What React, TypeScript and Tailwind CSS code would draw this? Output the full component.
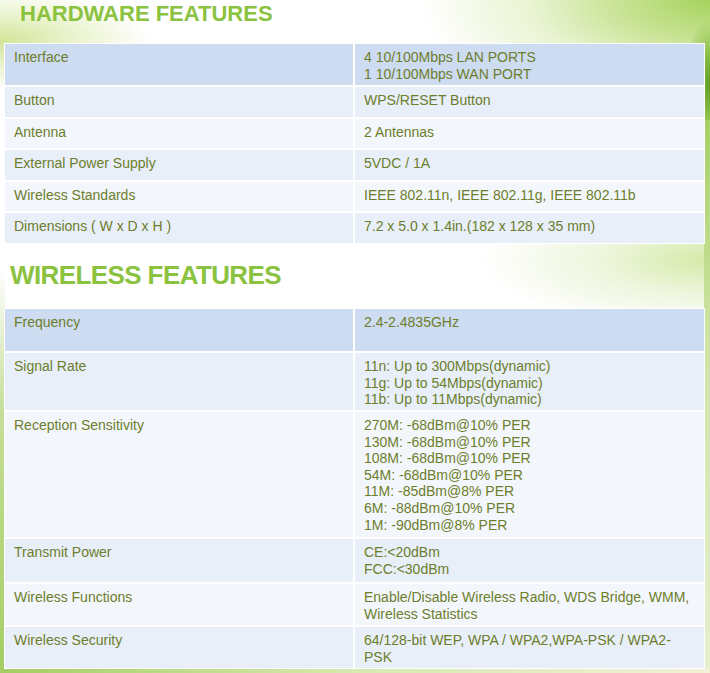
const HARDWARE = [
  { label: 'Interface', value: ['4 10/100Mbps LAN PORTS', '1 10/100Mbps WAN PORT'], h: 'h-[41px]' },
  { label: 'Button', value: ['WPS/RESET Button'], h: 'h-[29.5px]' },
  { label: 'Antenna', value: ['2 Antennas'], h: 'h-[29.5px]' },
  { label: 'External Power Supply', value: ['5VDC / 1A'], h: 'h-[29.5px]' },
  { label: 'Wireless Standards', value: ['IEEE 802.11n, IEEE 802.11g, IEEE 802.11b'], h: 'h-[29.5px]' },
  { label: 'Dimensions ( W x D x H )', value: ['7.2 x 5.0 x 1.4in.(182 x 128 x 35 mm)'], h: 'h-[29.5px]' },
]

const WIRELESS = [
  { label: 'Frequency', value: ['2.4-2.4835GHz'], h: 'h-[42px]' },
  {
    label: 'Signal Rate',
    value: ['11n: Up to 300Mbps(dynamic)', '11g: Up to 54Mbps(dynamic)', '11b: Up to 11Mbps(dynamic)'],
    h: 'h-[57px]',
  },
  {
    label: 'Reception Sensitivity',
    value: [
      '270M: -68dBm@10% PER',
      '130M: -68dBm@10% PER',
      '108M: -68dBm@10% PER',
      '54M: -68dBm@10% PER',
      '11M: -85dBm@8% PER',
      '6M: -88dBm@10% PER',
      '1M: -90dBm@8% PER',
    ],
    h: 'h-[125px]',
  },
  { label: 'Transmit Power', value: ['CE:<20dBm', 'FCC:<30dBm'], h: 'h-[43px]' },
  {
    label: 'Wireless Functions',
    value: ['Enable/Disable Wireless Radio, WDS Bridge, WMM,', 'Wireless Statistics'],
    h: 'h-[41px]',
  },
  {
    label: 'Wireless Security',
    value: ['64/128-bit WEP, WPA / WPA2,WPA-PSK / WPA2-', 'PSK'],
    h: 'h-[41px]',
  },
]

type Row = { label: string; value: string[]; h: string }

function SpecTable({ rows }: { rows: Row[] }) {
  return (
    <div className="ml-[4px] w-[701px] bg-white p-px flex flex-col gap-[2px]">
      {rows.map((row, i) => {
        const bg = i === 0 ? 'bg-[#cddcf1]' : i % 2 === 1 ? 'bg-[#e8eff9]' : 'bg-[#f3f7fc]'
        return (
          <div key={row.label} className={`flex gap-[2px] ${row.h}`}>
            <div className={`w-[348px] pl-[9px] pt-[5px] ${bg}`}>{row.label}</div>
            <div className={`flex-1 pl-[9px] pt-[5px] ${bg}`}>
              {row.value.map((line) => (
                <div key={line}>{line}</div>
              ))}
            </div>
          </div>
        )
      })}
    </div>
  )
}

export default function App() {
  return (
    <div className="relative w-[710px] h-[673px] overflow-hidden bg-white font-['Liberation_Sans',Arial,sans-serif] text-[14px] leading-[16.6px] text-[#6d7d2c]">
      {/* background glows */}
      <div className="absolute left-0 top-0 w-[220px] h-[90px] bg-[radial-gradient(150px_50px_at_0%_45%,#d3e59a_0%,#e8f2c8_45%,transparent_100%)]" />
      <div className="absolute right-0 top-0 w-[400px] h-[200px] bg-[radial-gradient(290px_125px_at_100%_0%,#a6d35e_0%,#c6e291_30%,#e9f4d2_62%,transparent_100%)]" />
      <div className="absolute right-0 top-[10px] w-[50px] h-[150px] bg-[radial-gradient(28px_65px_at_100%_50%,#5f9d25_0%,#8cc148_50%,transparent_100%)]" />
      <div className="absolute right-0 top-[170px] w-[320px] h-[180px] bg-[radial-gradient(230px_70px_at_100%_50%,#d6eaa8_0%,#eef6de_50%,transparent_100%)]" />
      <div className="absolute right-0 top-[120px] bottom-0 w-[6px] bg-[linear-gradient(to_bottom,#a6cf64,#cfe4a6_40%,#e6f0cf)]" />
      <div className="absolute left-0 top-[270px] bottom-0 w-[5px] bg-[linear-gradient(to_bottom,transparent,#c4df98_35%,#a5cd62)]" />
      <div className="absolute left-0 right-0 bottom-0 h-[5px] bg-[linear-gradient(to_right,#a5cd62,#d6e9b0_50%,#f3f0d8)]" />

      <div className="relative flex flex-col">
        <div className="h-[43px] pl-[20px] pt-[3px]">
          <h2 className="text-[22px] leading-none font-bold text-[#8bc23f]">HARDWARE FEATURES</h2>
        </div>
        <SpecTable rows={HARDWARE} />
        <div className="h-[64.5px] pl-[10px] pt-[18px]">
          <h2 className="text-[26px] leading-none font-bold tracking-[-0.6px] text-[#8bc23f]">WIRELESS FEATURES</h2>
        </div>
        <SpecTable rows={WIRELESS} />
      </div>
    </div>
  )
}
